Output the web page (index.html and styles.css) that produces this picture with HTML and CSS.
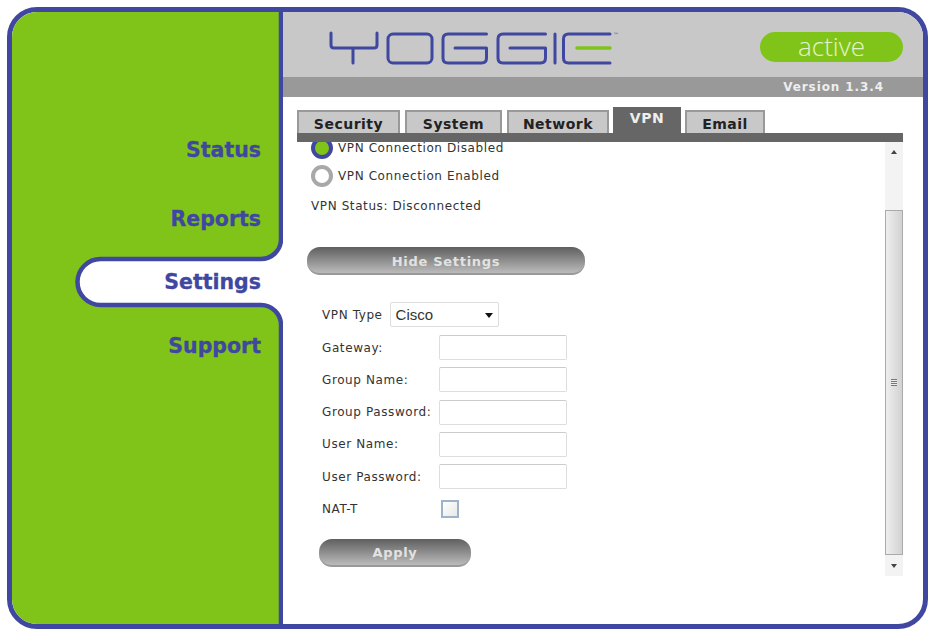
FILE: index.html
```html
<!DOCTYPE html>
<html lang="en">
<head>
    <meta charset="UTF-8">
    <meta name="viewport" content="width=device-width, initial-scale=1.0">
    <title>Yoggie Settings</title>
    <link rel="stylesheet" href="styles.css">
</head>
<body>
    <div class="frame">
        <!-- Left navigation, the green shape sits behind the labels -->
        <nav class="sidebar">
            <svg class="sidebar-shape" width="271" height="612" viewBox="0 0 271 612">
                <path fill="#80c41a" d="M0 0H269V228A20 20 0 0 1 249 247H88.5A23 23 0 0 0 88.5 293H249A20 20 0 0 1 269 313V612H0Z"/>
                <path fill="none" stroke="#3f47a0" stroke-width="4.5" d="M269 0V228A20 20 0 0 1 249 247H88.5A23 23 0 0 0 88.5 293H249A20 20 0 0 1 269 313V612"/>
            </svg>
            <a class="nav-item nav-status">Status</a>
            <a class="nav-item">Reports</a>
            <a class="nav-item">Settings</a>
            <a class="nav-item">Support</a>
        </nav>

        <div class="main">
            <header class="header">
                <svg class="logo" role="img" aria-label="Yoggie logo" width="300" height="40" viewBox="0 0 300 40">
                    <g fill="none" stroke="#3f47a0" stroke-width="3" stroke-linecap="round" stroke-linejoin="round">
                        <path d="M3 2V14Q3 17 6 17H46Q49 17 49 14V2M25 17V32"/>
                        <rect x="60" y="3" width="44" height="29" rx="5"/>
                        <path d="M158.5 3H120Q115 3 115 8V27Q115 32 120 32H153.5Q158.5 32 158.5 27V17H127"/>
                        <path d="M217.5 3H175Q170 3 170 8V27Q170 32 175 32H212.5Q217.5 32 217.5 27V17H182"/>
                        <path d="M227 3V32"/>
                        <path d="M282 3H240.5Q235.5 3 235.5 8V27Q235.5 32 240.5 32H282"/>
                    </g>
                    <path d="M249 17H282" stroke="#80c41a" stroke-width="3.5" stroke-linecap="round"/>
                    <text x="285" y="6" font-size="6" fill="#3f47a0">™</text>
                </svg>
                <div class="status-pill">active</div>
            </header>
            <div class="version-bar">Version 1.3.4</div>

            <div class="content">
                <div class="tabs">
                    <div class="tab tab-security">Security</div>
                    <div class="tab tab-system">System</div>
                    <div class="tab tab-network">Network</div>
                    <div class="tab tab-vpn active">VPN</div>
                    <div class="tab tab-email">Email</div>
                </div>

                <div class="panel">
                    <div class="panel-body">
                        <div class="radio-row first">
                            <span class="radio checked"></span>
                            <span>VPN Connection Disabled</span>
                        </div>
                        <div class="radio-row">
                            <span class="radio"></span>
                            <span>VPN Connection Enabled</span>
                        </div>
                        <p class="vpn-status">VPN Status: Disconnected</p>

                        <button class="pill-btn hide-btn" type="button">Hide Settings</button>

                        <form class="vpn-form">
                            <div class="type-row">
                                <label for="vpnType">VPN Type</label>
                                <div class="select-wrap">
                                    <select id="vpnType">
                                        <option>Cisco</option>
                                    </select>
                                </div>
                            </div>
                            <div class="fields">
                                <label for="gateway">Gateway:</label>
                                <input type="text" id="gateway">
                                <label for="groupName">Group Name:</label>
                                <input type="text" id="groupName">
                                <label for="groupPassword">Group Password:</label>
                                <input type="text" id="groupPassword">
                                <label for="userName">User Name:</label>
                                <input type="text" id="userName">
                                <label for="userPassword">User Password:</label>
                                <input type="text" id="userPassword">
                                <label for="natT">NAT-T</label>
                                <input type="checkbox" id="natT">
                            </div>
                            <button class="pill-btn apply-btn" type="button">Apply</button>
                        </form>
                    </div>

                    <!-- Old style scrollbar -->
                    <div class="scrollbar">
                        <div class="scroll-track">
                            <span class="arrow-up"></span>
                        </div>
                        <div class="scroll-thumb">
                            <span class="grip"></span>
                        </div>
                        <div class="scroll-end">
                            <span class="arrow-down"></span>
                        </div>
                    </div>
                </div>
            </div>
        </div>
    </div>
</body>
</html>
```

FILE: styles.css
```css
body {
    margin: 0;
    background-color: #fff;
    font-family: "DejaVu Sans", Verdana, sans-serif;
    font-size: 12px;
    letter-spacing: 0.6px;
    color: #333;
}
.frame {
    display: flex;
    box-sizing: border-box;
    width: 921px;
    height: 622px;
    margin: 7px 0 0 7px;
    border: 5px solid #3f47a0;
    border-radius: 30px;
    overflow: hidden;
}

/* sidebar */
.sidebar {
    position: relative;
    display: flex;
    flex-direction: column;
    align-items: flex-end;
    gap: 39.5px;
    flex: 0 0 271px;
    box-sizing: border-box;
    padding: 126px 22px 0 0;
}
.sidebar-shape {
    position: absolute;
    top: 0;
    left: 0;
}
.nav-item {
    position: relative;
    font-size: 20.5px;
    letter-spacing: 0;
    line-height: 24px;
    font-weight: bold;
    -webkit-text-stroke: 0.3px #3f47a0;
    color: #3f47a0;
}
.nav-status {
    margin-bottom: 5px;
}

/* header */
.main {
    display: flex;
    flex-direction: column;
    flex: 1;
    min-width: 0;
}
.header {
    display: flex;
    justify-content: space-between;
    height: 65px;
    background-color: #c8c8c8;
}
.logo {
    margin: 19px 0 0 45px;
}
.status-pill {
    width: 143px;
    height: 30px;
    margin: 20px 20px 0 0;
    border-radius: 15px;
    background-color: #80c41a;
    color: #e4f3c8;
    font-family: "Open Sans", sans-serif;
    font-size: 26px;
    font-weight: 300;
    letter-spacing: 0;
    line-height: 28px;
    text-align: center;
}
.version-bar {
    height: 20px;
    padding-right: 39px;
    background-color: #999;
    color: #eee;
    font-size: 12px;
    font-weight: bold;
    letter-spacing: 0.9px;
    line-height: 20px;
    text-align: right;
}

/* tabs */
.content {
    padding: 10px 20px 0 14px;
}
.tabs {
    display: flex;
    align-items: flex-end;
    height: 26px;
}
.tab {
    box-sizing: border-box;
    height: 23px;
    margin-right: 5px;
    border: 2px solid #999;
    border-bottom: none;
    background-color: #c8c8c8;
    color: #222;
    font-size: 14px;
    font-weight: bold;
    letter-spacing: 0.5px;
    line-height: 24px;
    text-align: center;
}
.tab-security {
    width: 103px;
}
.tab-system {
    width: 97px;
}
.tab-network {
    width: 102px;
    margin-right: 4px;
}
.tab-vpn {
    width: 68px;
    margin-right: 4px;
}
.tab-email {
    width: 80px;
}
.tab.active {
    height: 26px;
    border: none;
    background-color: #666;
    color: #eee;
    line-height: 22px;
}

/* panel */
.panel {
    display: flex;
    height: 434px;
    border-top: 9px solid #666;
}
.panel-body {
    flex: 1;
    min-width: 0;
    padding-left: 14px;
    overflow: hidden;
}
.radio-row {
    display: flex;
    align-items: center;
    gap: 5px;
    height: 22px;
    margin-bottom: 6px;
}
.radio-row.first {
    margin-top: -5px;
}
.radio {
    box-sizing: border-box;
    width: 22px;
    height: 22px;
    border: 4px solid #a8a8a8;
    border-radius: 50%;
    background-color: #fff;
}
.radio.checked {
    border-color: #3f47a0;
    background-color: #80c41a;
}
.vpn-status {
    margin: 12px 0 0;
    line-height: 15px;
}
.pill-btn {
    display: block;
    box-sizing: border-box;
    height: 28px;
    padding: 0;
    border: none;
    border-bottom: 2px solid #999;
    border-radius: 13px;
    background: linear-gradient(#5f5f5f, #bbb);
    color: #e2e2e2;
    font-family: "DejaVu Sans", Verdana, sans-serif;
    font-size: 13px;
    font-weight: bold;
    letter-spacing: 0.7px;
}
.hide-btn {
    width: 278px;
    margin: 33px 0 0 -4px;
    padding-top: 2px;
}
.vpn-form {
    padding: 27px 0 0 11px;
}
.type-row {
    display: flex;
    align-items: center;
    gap: 7px;
}
.select-wrap {
    position: relative;
    width: 109px;
}
.select-wrap::after {
    content: "";
    position: absolute;
    top: 11px;
    right: 6px;
    border: 4px solid transparent;
    border-top: 5px solid #111;
    border-bottom: none;
}
select {
    display: block;
    box-sizing: border-box;
    width: 100%;
    height: 25px;
    padding: 0 0 0 5px;
    border: 1px solid #ddd;
    border-radius: 2px;
    background-color: #fff;
    appearance: none;
    color: #333;
    font-family: "Liberation Sans", Arial, sans-serif;
    font-size: 15px;
}
.fields {
    display: grid;
    grid-template-columns: 117px 128px;
    grid-auto-rows: 25px;
    row-gap: 7.3px;
    align-items: center;
    margin-top: 8px;
}
input[type="text"] {
    box-sizing: border-box;
    width: 128px;
    height: 25px;
    border: 1px solid #ddd;
    border-top-color: #ccc;
    border-radius: 2px;
    background-color: #fff;
}
input[type="checkbox"] {
    box-sizing: border-box;
    width: 18px;
    height: 18px;
    margin: 0 0 0 2px;
    border: 2px solid #9db3cc;
    background: linear-gradient(135deg, #fff, #e8e8e8);
    appearance: none;
}
.apply-btn {
    width: 152px;
    margin: 18px 0 0 -3px;
}

/* scrollbar */
.scrollbar {
    display: flex;
    flex-direction: column;
    flex: 0 0 18px;
}
.scroll-track {
    display: flex;
    align-items: flex-start;
    justify-content: center;
    height: 68px;
    padding-top: 8px;
    box-sizing: border-box;
    background-color: #f3f3f3;
}
.arrow-up {
    border: 3px solid transparent;
    border-top: none;
    border-bottom: 4px solid #444;
}
.scroll-thumb {
    display: flex;
    align-items: center;
    justify-content: center;
    box-sizing: border-box;
    height: 345px;
    border: 1px solid #aaa;
    background: linear-gradient(90deg, #eee, #d2d2d2);
}
.grip {
    width: 6px;
    height: 7px;
    background: repeating-linear-gradient(#777 0, #777 1px, #eee 1px, #eee 2px);
}
.scroll-end {
    display: flex;
    align-items: flex-start;
    justify-content: center;
    height: 21px;
    padding-top: 9px;
    box-sizing: border-box;
    background-color: #f3f3f3;
}
.arrow-down {
    height: 0;
    border: 3px solid transparent;
    border-bottom: none;
    border-top: 4px solid #444;
}
```
